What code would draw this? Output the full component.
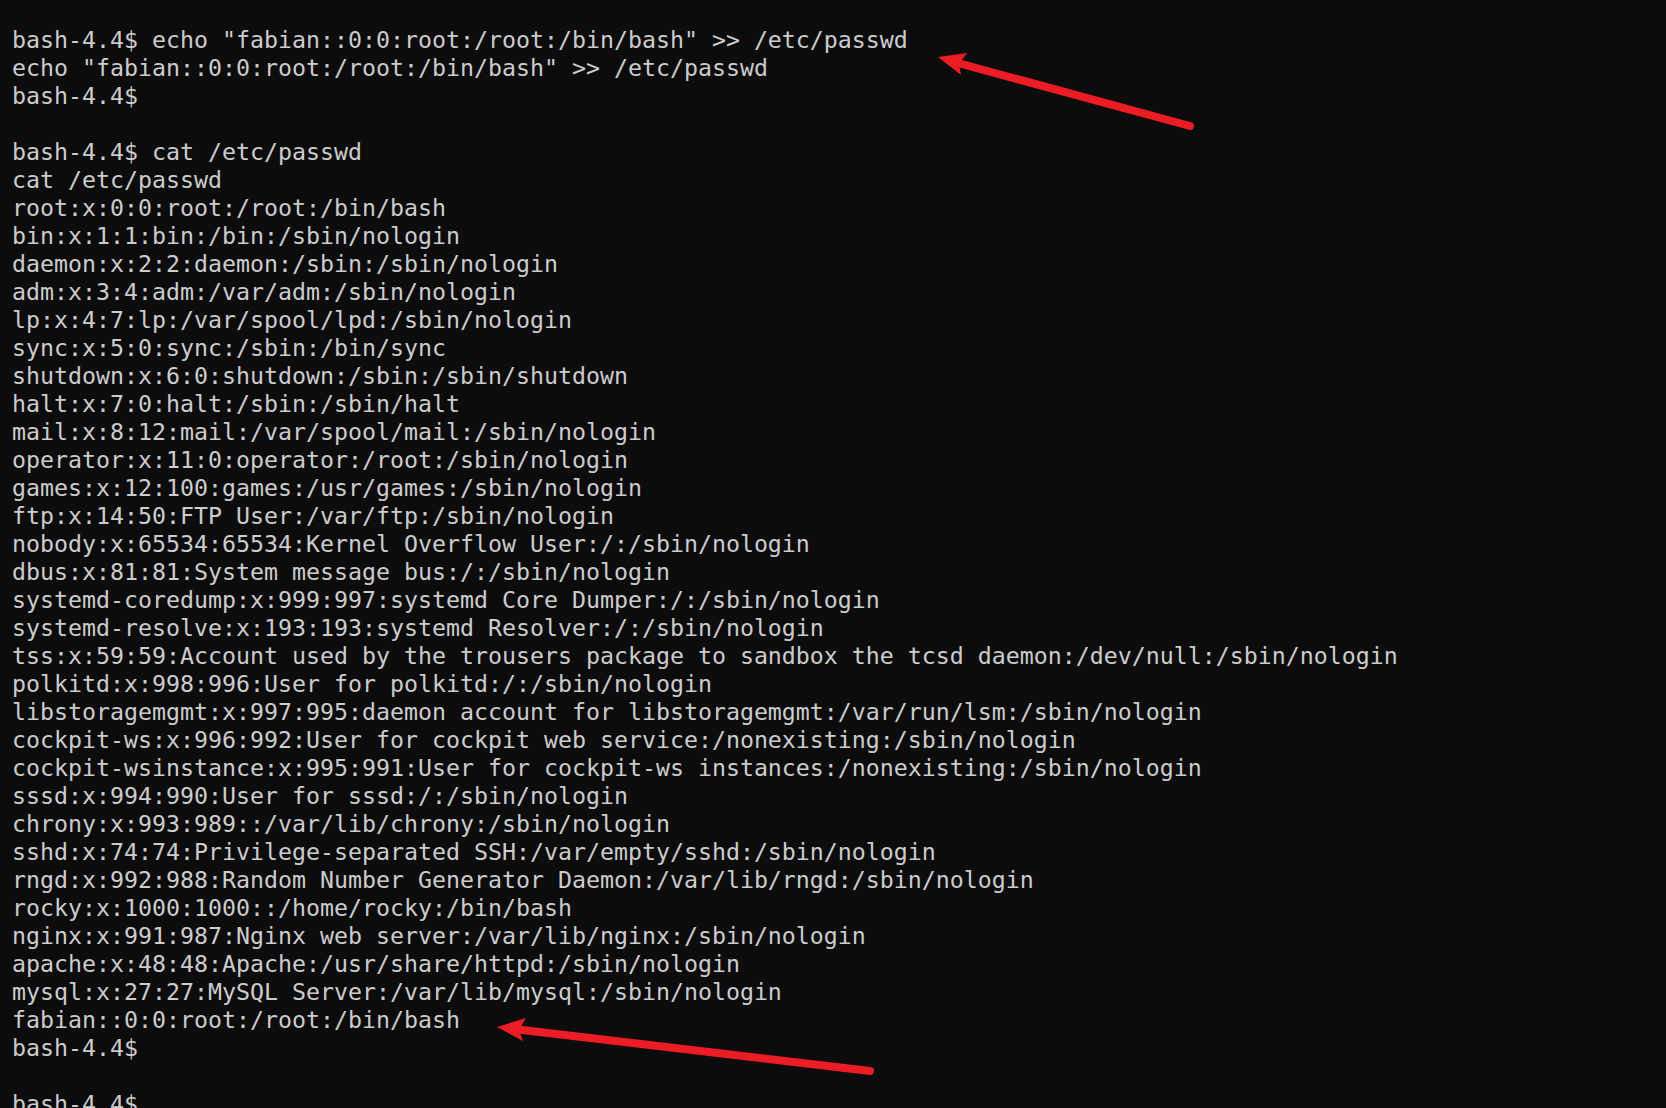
const lines = [
  'bash-4.4$ echo "fabian::0:0:root:/root:/bin/bash" >> /etc/passwd',
  'echo "fabian::0:0:root:/root:/bin/bash" >> /etc/passwd',
  'bash-4.4$',
  '',
  'bash-4.4$ cat /etc/passwd',
  'cat /etc/passwd',
  'root:x:0:0:root:/root:/bin/bash',
  'bin:x:1:1:bin:/bin:/sbin/nologin',
  'daemon:x:2:2:daemon:/sbin:/sbin/nologin',
  'adm:x:3:4:adm:/var/adm:/sbin/nologin',
  'lp:x:4:7:lp:/var/spool/lpd:/sbin/nologin',
  'sync:x:5:0:sync:/sbin:/bin/sync',
  'shutdown:x:6:0:shutdown:/sbin:/sbin/shutdown',
  'halt:x:7:0:halt:/sbin:/sbin/halt',
  'mail:x:8:12:mail:/var/spool/mail:/sbin/nologin',
  'operator:x:11:0:operator:/root:/sbin/nologin',
  'games:x:12:100:games:/usr/games:/sbin/nologin',
  'ftp:x:14:50:FTP User:/var/ftp:/sbin/nologin',
  'nobody:x:65534:65534:Kernel Overflow User:/:/sbin/nologin',
  'dbus:x:81:81:System message bus:/:/sbin/nologin',
  'systemd-coredump:x:999:997:systemd Core Dumper:/:/sbin/nologin',
  'systemd-resolve:x:193:193:systemd Resolver:/:/sbin/nologin',
  'tss:x:59:59:Account used by the trousers package to sandbox the tcsd daemon:/dev/null:/sbin/nologin',
  'polkitd:x:998:996:User for polkitd:/:/sbin/nologin',
  'libstoragemgmt:x:997:995:daemon account for libstoragemgmt:/var/run/lsm:/sbin/nologin',
  'cockpit-ws:x:996:992:User for cockpit web service:/nonexisting:/sbin/nologin',
  'cockpit-wsinstance:x:995:991:User for cockpit-ws instances:/nonexisting:/sbin/nologin',
  'sssd:x:994:990:User for sssd:/:/sbin/nologin',
  'chrony:x:993:989::/var/lib/chrony:/sbin/nologin',
  'sshd:x:74:74:Privilege-separated SSH:/var/empty/sshd:/sbin/nologin',
  'rngd:x:992:988:Random Number Generator Daemon:/var/lib/rngd:/sbin/nologin',
  'rocky:x:1000:1000::/home/rocky:/bin/bash',
  'nginx:x:991:987:Nginx web server:/var/lib/nginx:/sbin/nologin',
  'apache:x:48:48:Apache:/usr/share/httpd:/sbin/nologin',
  'mysql:x:27:27:MySQL Server:/var/lib/mysql:/sbin/nologin',
  'fabian::0:0:root:/root:/bin/bash',
  'bash-4.4$',
  '',
  'bash-4.4$',
]

function Arrows() {
  // red annotation arrows drawn over the terminal output
  return (
    <svg className="absolute inset-0 pointer-events-none" width="1666" height="1108" viewBox="0 0 1666 1108">
      <line x1="1190" y1="126" x2="958" y2="63" stroke="#ec1c24" strokeWidth="8" strokeLinecap="round" />
      <polygon points="938,57 967,53 959,64 961,75" fill="#ec1c24" />
      <line x1="870" y1="1071" x2="518" y2="1029.5" stroke="#ec1c24" strokeWidth="8" strokeLinecap="round" />
      <polygon points="497,1027 526,1018 519,1030 523,1041" fill="#ec1c24" />
    </svg>
  )
}

export default function App() {
  return (
    <div className="relative w-[1666px] h-[1108px] overflow-hidden bg-[#0c0c0c]">
      <div
        className="pt-[26px] pl-[12px] text-[#cccccc] text-[23.25px] leading-[28px] whitespace-pre"
        style={{ fontFamily: '"DejaVu Sans Mono", "Liberation Mono", monospace' }}
      >
        {lines.map((line, i) => (
          <div key={i} className="h-[28px]">
            {line}
          </div>
        ))}
      </div>
      <Arrows />
    </div>
  )
}
